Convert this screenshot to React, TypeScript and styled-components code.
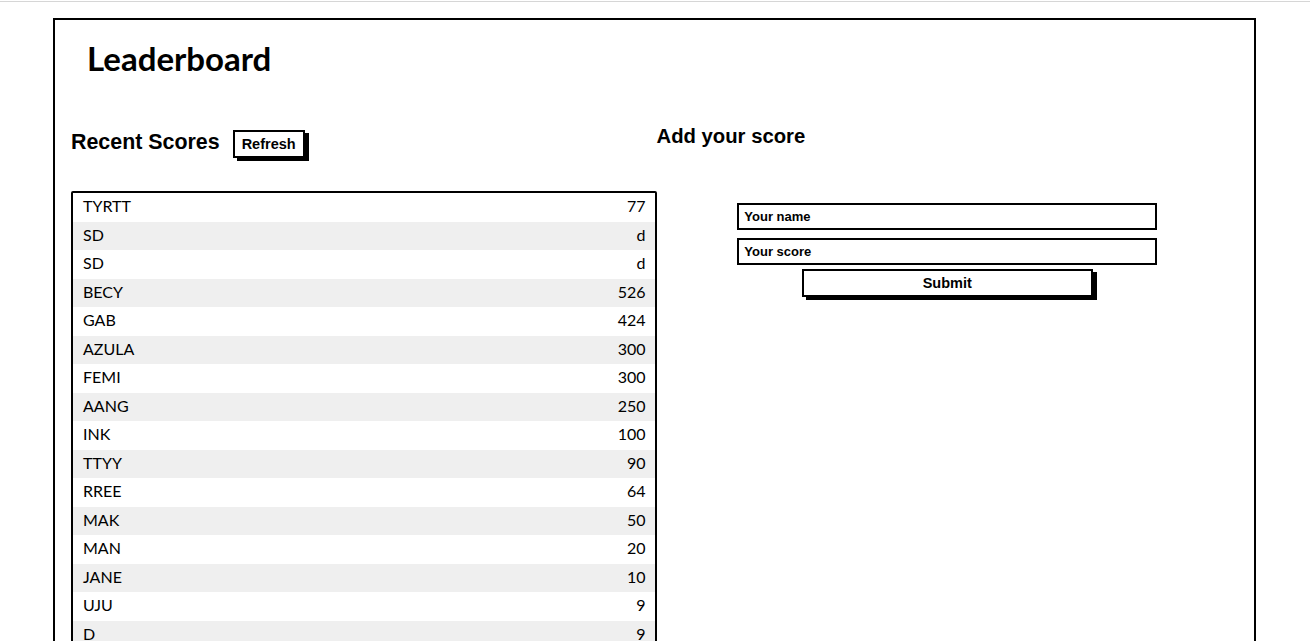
import React from "react";
import styled, { createGlobalStyle } from "styled-components";

const GlobalStyle = createGlobalStyle`
  html, body { margin: 0; padding: 0; background: #ffffff; }
  body { font-family: "Liberation Sans", Arial, sans-serif; color: #000; }
  * { box-sizing: border-box; }
`;

const TopRule = styled.div`
  margin-top: 1px;
  height: 1px;
  background: #d6d6d6;
`;

const Frame = styled.main`
  width: 1203px;
  margin: 16px 0 0 53px;
  border: 2px solid #000;
  border-bottom: none;
  padding: 0 16px 40px;
  min-height: 700px;
`;

const Title = styled.h1`
  margin: 0;
  padding: 18px 0 0 16px;
  height: 106px;
  font-family: "Lato", sans-serif;
  font-weight: 700;
  font-size: 33px;
  line-height: 40px;
`;

const Columns = styled.div`
  display: grid;
  grid-template-columns: 1fr 1fr;
`;

const Column = styled.section<{ $pad?: number }>`
  padding-left: ${(p) => p.$pad ?? 0}px;
`;

const HeadRow = styled.div`
  display: flex;
  align-items: flex-start;
  gap: 13px;
  height: 40px;
`;

const SectionTitle = styled.h2<{ $size: number; $top?: number }>`
  margin: ${(p) => p.$top ?? 0}px 0 0;
  font-family: "Liberation Sans", Arial, sans-serif;
  font-weight: 700;
  font-size: ${(p) => p.$size}px;
  line-height: 1.15;
`;

const ShadowButton = styled.button<{ $width?: string; $top?: number }>`
  margin-top: ${(p) => p.$top ?? 0}px;
  font-family: "Liberation Sans", Arial, sans-serif;
  font-weight: 700;
  font-size: 14.5px;
  color: #000;
  background: #fff;
  border: 2px solid #000;
  box-shadow: 4px 3px 0 #000;
  height: 28px;
  padding: 0 7px;
  width: ${(p) => p.$width ?? "auto"};
  cursor: pointer;
`;

const Board = styled.div`
  margin-top: 25px;
  margin-right: -2px;
  border: 2px solid #000;
  border-radius: 2px;
`;

const Row = styled.div<{ $odd: boolean }>`
  display: flex;
  justify-content: space-between;
  align-items: center;
  height: 28.53px;
  padding: 0 9px 3px 10px;
  background: ${(p) => (p.$odd ? "#efefef" : "#ffffff")};
  font-family: "Lato", sans-serif;
  font-size: 16px;
`;

const Form = styled.form`
  margin-top: 55px;
  display: flex;
  flex-direction: column;
  align-items: center;
  gap: 8px;
`;

const Field = styled.input`
  width: 72.2%;
  height: 27px;
  border: 2px solid #000;
  border-radius: 0;
  padding: 0 5px;
  font-family: "Liberation Sans", Arial, sans-serif;
  font-weight: 700;
  font-size: 13px;
  outline: none;
  &::placeholder { color: #000; opacity: 1; }
`;

const SubmitWrap = styled.div`
  width: 100%;
  display: flex;
  justify-content: center;
  margin-top: -4px;
`;

const scores: [string, string][] = [
  ["TYRTT", "77"],
  ["SD", "d"],
  ["SD", "d"],
  ["BECY", "526"],
  ["GAB", "424"],
  ["AZULA", "300"],
  ["FEMI", "300"],
  ["AANG", "250"],
  ["INK", "100"],
  ["TTYY", "90"],
  ["RREE", "64"],
  ["MAK", "50"],
  ["MAN", "20"],
  ["JANE", "10"],
  ["UJU", "9"],
  ["D", "9"],
  ["KO", "5"],
  ["A", "1"],
];

export default function App() {
  return (
    <>
      <GlobalStyle />
      <TopRule />
      <Frame>
        <Title>Leaderboard</Title>
        <Columns>
          <Column>
            <HeadRow>
              <SectionTitle $size={21.4} $top={4}>
                Recent Scores
              </SectionTitle>
              <ShadowButton type="button" $top={4}>
                Refresh
              </ShadowButton>
            </HeadRow>
            <Board>
              {scores.map(([name, score], i) => (
                <Row key={i} $odd={i % 2 === 1}>
                  <span>{name}</span>
                  <span>{score}</span>
                </Row>
              ))}
            </Board>
          </Column>
          <Column $pad={2}>
            <SectionTitle $size={20.3} $top={-1}>
              Add your score
            </SectionTitle>
            <Form onSubmit={(e) => e.preventDefault()}>
              <Field placeholder="Your name" />
              <Field placeholder="Your score" />
              <SubmitWrap>
                <ShadowButton type="submit" $width="50%">
                  Submit
                </ShadowButton>
              </SubmitWrap>
            </Form>
          </Column>
        </Columns>
      </Frame>
    </>
  );
}
